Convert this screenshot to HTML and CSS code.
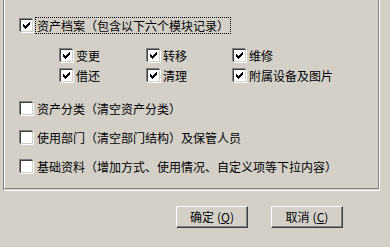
FILE: index.html
```html
<!DOCTYPE html>
<html lang="zh-CN">
<head>
<meta charset="utf-8">
<link rel="stylesheet" href="styles.css">
</head>
<body>
<div class="dialog">
  <div class="group-outer">
    <div class="group">
      <div class="row row-main">
        <span class="cb checked"><svg width="7" height="7" viewBox="0 0 7 7"><path d="M0 2h1v3H0zM1 3h1v3H1zM2 4h1v3H2zM3 3h1v3H3zM4 2h1v3H4zM5 1h1v3H5zM6 0h1v3H6z" fill="#000"/></svg></span>
        <span class="label focus">资产档案（包含以下六个模块记录）</span>
      </div>
      <div class="subgrid">
        <div class="sub"><span class="cb checked"><svg width="7" height="7" viewBox="0 0 7 7"><path d="M0 2h1v3H0zM1 3h1v3H1zM2 4h1v3H2zM3 3h1v3H3zM4 2h1v3H4zM5 1h1v3H5zM6 0h1v3H6z" fill="#000"/></svg></span><span class="sublabel">变更</span></div>
        <div class="sub"><span class="cb checked"><svg width="7" height="7" viewBox="0 0 7 7"><path d="M0 2h1v3H0zM1 3h1v3H1zM2 4h1v3H2zM3 3h1v3H3zM4 2h1v3H4zM5 1h1v3H5zM6 0h1v3H6z" fill="#000"/></svg></span><span class="sublabel">转移</span></div>
        <div class="sub"><span class="cb checked"><svg width="7" height="7" viewBox="0 0 7 7"><path d="M0 2h1v3H0zM1 3h1v3H1zM2 4h1v3H2zM3 3h1v3H3zM4 2h1v3H4zM5 1h1v3H5zM6 0h1v3H6z" fill="#000"/></svg></span><span class="sublabel">维修</span></div>
        <div class="sub"><span class="cb checked"><svg width="7" height="7" viewBox="0 0 7 7"><path d="M0 2h1v3H0zM1 3h1v3H1zM2 4h1v3H2zM3 3h1v3H3zM4 2h1v3H4zM5 1h1v3H5zM6 0h1v3H6z" fill="#000"/></svg></span><span class="sublabel">借还</span></div>
        <div class="sub"><span class="cb checked"><svg width="7" height="7" viewBox="0 0 7 7"><path d="M0 2h1v3H0zM1 3h1v3H1zM2 4h1v3H2zM3 3h1v3H3zM4 2h1v3H4zM5 1h1v3H5zM6 0h1v3H6z" fill="#000"/></svg></span><span class="sublabel">清理</span></div>
        <div class="sub"><span class="cb checked"><svg width="7" height="7" viewBox="0 0 7 7"><path d="M0 2h1v3H0zM1 3h1v3H1zM2 4h1v3H2zM3 3h1v3H3zM4 2h1v3H4zM5 1h1v3H5zM6 0h1v3H6z" fill="#000"/></svg></span><span class="sublabel">附属设备及图片</span></div>
      </div>
      <div class="row row-a">
        <span class="cb"></span>
        <span class="label">资产分类（清空资产分类）</span>
      </div>
      <div class="row row-b">
        <span class="cb"></span>
        <span class="label">使用部门（清空部门结构）及保管人员</span>
      </div>
      <div class="row row-b">
        <span class="cb"></span>
        <span class="label">基础资料（增加方式、使用情况、自定义项等下拉内容）</span>
      </div>
    </div>
  </div>
  <div class="buttons">
    <button class="btn" type="button">确定<span class="key">(<u>Q</u>)</span></button>
    <button class="btn" type="button">取消<span class="key">(<u>C</u>)</span></button>
  </div>
</div>
</body>
</html>
```
FILE: styles.css
```css
html, body {
  margin: 0;
  padding: 0;
  background: #d4d0c8;
}
body {
  width: 390px;
  height: 247px;
  overflow: hidden;
  font-family: "Noto Sans CJK SC", "Liberation Sans", sans-serif;
  font-size: 12px;
  color: #000;
}
.dialog {
  padding-left: 3px;
}
.group-outer {
  width: 375px;
  height: 190px;
  border-left: 1px solid #808080;
  border-right: 1px solid #fff;
  border-bottom: 1px solid #fff;
}
.group {
  height: 189px;
  border-left: 1px solid #fff;
  border-right: 1px solid #808080;
  border-bottom: 1px solid #808080;
  padding-left: 14px;
  padding-top: 17px;
  box-sizing: border-box;
}
.row {
  display: flex;
  align-items: center;
  height: 17px;
}
.row-a { margin-top: 18px; }
.row-b { margin-top: 12px; }
.cb {
  width: 11px;
  height: 11px;
  flex: none;
  background: #fff;
  border: 1px solid;
  border-color: #404040 #d4d0c8 #d4d0c8 #404040;
  box-shadow: -1px -1px 0 0 #808080, 1px 1px 0 0 #fff;
  margin: 1px 0 1px 1px;
  display: flex;
  align-items: center;
  justify-content: center;
}
.cb svg { display: block; }
.label {
  margin-left: 2px;
  padding: 0 1px;
  border: 1px solid transparent;
  line-height: 15px;
  white-space: nowrap;
}
.label.focus {
  border: 1px dotted #000;
}
.subgrid {
  display: grid;
  grid-template-columns: 87px 86px auto;
  row-gap: 7px;
  padding-left: 40px;
  margin-top: 15px;
}
.sub {
  display: flex;
  align-items: center;
  height: 13px;
}
.sublabel {
  margin-left: 3px;
  line-height: 13px;
  white-space: nowrap;
}
.buttons {
  display: flex;
  gap: 23px;
  padding-left: 173px;
  margin-top: 15px;
}
.btn {
  width: 72px;
  height: 22px;
  margin: 0;
  padding: 0;
  background: #d4d0c8;
  font-family: "Noto Sans CJK SC", "Liberation Sans", sans-serif;
  font-size: 12px;
  color: #000;
  border: 1px solid;
  border-color: #fff #404040 #404040 #fff;
  box-shadow: inset -1px -1px 0 #808080, inset 1px 1px 0 #d4d0c8;
  line-height: 18px;
}
.key {
  margin-left: 3px;
}
.btn u {
  text-decoration: underline;
}
```
